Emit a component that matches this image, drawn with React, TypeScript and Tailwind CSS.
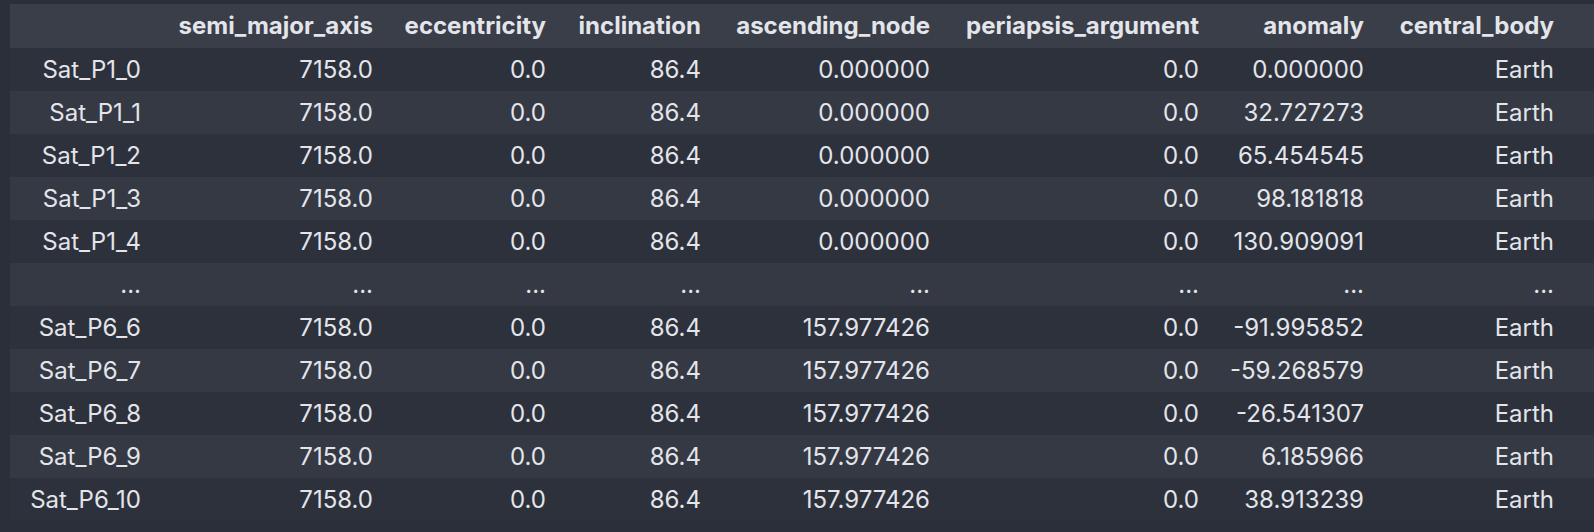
const cols = ["semi_major_axis","eccentricity","inclination","ascending_node","periapsis_argument","anomaly","central_body"];
const rows: string[][] = [
["Sat_P1_0","7158.0","0.0","86.4","0.000000","0.0","0.000000","Earth"],
["Sat_P1_1","7158.0","0.0","86.4","0.000000","0.0","32.727273","Earth"],
["Sat_P1_2","7158.0","0.0","86.4","0.000000","0.0","65.454545","Earth"],
["Sat_P1_3","7158.0","0.0","86.4","0.000000","0.0","98.181818","Earth"],
["Sat_P1_4","7158.0","0.0","86.4","0.000000","0.0","130.909091","Earth"],
["...","...","...","...","...","...","...","..."],
["Sat_P6_6","7158.0","0.0","86.4","157.977426","0.0","-91.995852","Earth"],
["Sat_P6_7","7158.0","0.0","86.4","157.977426","0.0","-59.268579","Earth"],
["Sat_P6_8","7158.0","0.0","86.4","157.977426","0.0","-26.541307","Earth"],
["Sat_P6_9","7158.0","0.0","86.4","157.977426","0.0","6.185966","Earth"],
["Sat_P6_10","7158.0","0.0","86.4","157.977426","0.0","38.913239","Earth"],
];
const grid = "grid grid-cols-[143px_232px_173px_155px_229px_269px_165px_218px]";
const cell = "text-right pr-3 flex items-center justify-end whitespace-nowrap";
export default function App() {
  return (
    <div className="w-[1594px] h-[532px] bg-[#2b2f3a] pt-[4px] pl-[10px] text-[24px] leading-none text-[#e3e5ea] overflow-hidden" style={{fontFamily:'Inter, "Liberation Sans", sans-serif'}}>
      <div className={`${grid} h-[44px] bg-[#3a3e49] font-bold`}>
        <div />
        {cols.map((c,i)=>(<div key={c} className={`${cell} ${i===6?"pr-[40px]":""}`}>{c}</div>))}
      </div>
      {rows.map((r,ri)=>(
        <div key={ri} className={`${grid} h-[43px] ${ri%2===1?"bg-[#353944]":"bg-[#2d313c]"}`}>
          {r.map((v,i)=>(<div key={i} className={`${cell} ${i===7?"pr-[40px]":""}`}>{v}</div>))}
        </div>
      ))}
    </div>
  );
}
